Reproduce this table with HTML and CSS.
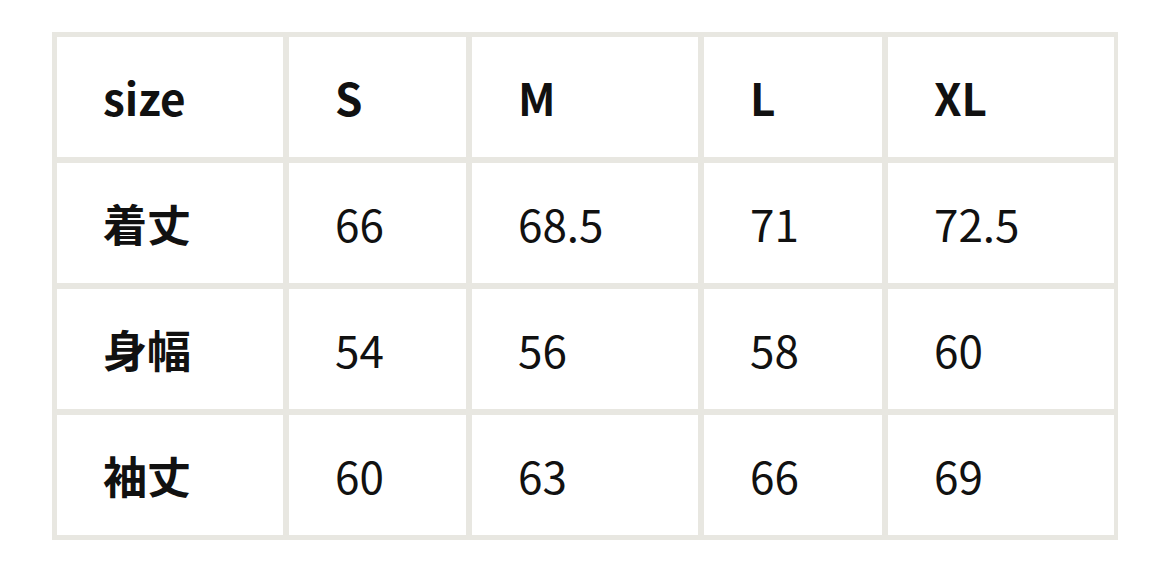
FILE: index.html
```html
<!DOCTYPE html>
<html lang="ja">
<head>
<meta charset="utf-8">
<link rel="stylesheet" href="styles.css">
</head>
<body>
<div class="size-table">
  <div class="cell head">size</div>
  <div class="cell head">S</div>
  <div class="cell head">M</div>
  <div class="cell head">L</div>
  <div class="cell head">XL</div>

  <div class="cell head">着丈</div>
  <div class="cell">66</div>
  <div class="cell">68.5</div>
  <div class="cell">71</div>
  <div class="cell">72.5</div>

  <div class="cell head">身幅</div>
  <div class="cell">54</div>
  <div class="cell">56</div>
  <div class="cell">58</div>
  <div class="cell">60</div>

  <div class="cell head">袖丈</div>
  <div class="cell">60</div>
  <div class="cell">63</div>
  <div class="cell">66</div>
  <div class="cell">69</div>
</div>
</body>
</html>
```

FILE: styles.css
```css
html, body {
  margin: 0;
  padding: 0;
  background: #ffffff;
}

body {
  padding-top: 32px;
  font-family: "Noto Sans CJK JP", "Noto Sans", sans-serif;
  color: #111111;
}

.size-table {
  width: 1066px;
  margin: 0 auto;
  box-sizing: border-box;
  display: grid;
  grid-template-columns: 226px 177px 226px 178px 226px;
  grid-auto-rows: 120px;
  column-gap: 6px;
  row-gap: 6px;
  padding: 5px;
  background: #e8e7e1;
}

.cell {
  background: #ffffff;
  display: flex;
  align-items: center;
  padding-left: 46px;
  font-size: 44px;
  letter-spacing: 0;
  font-weight: 400;
  line-height: 1;
}

.head {
  font-weight: 700;
}
```
